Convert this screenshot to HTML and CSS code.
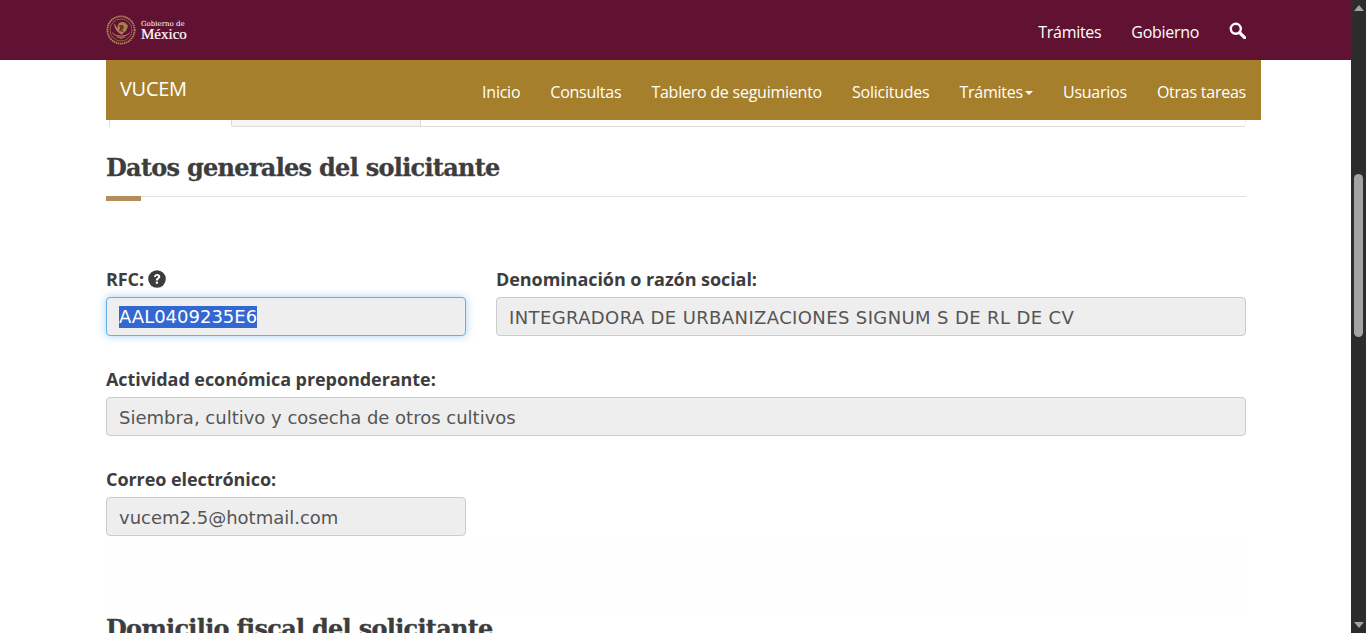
FILE: index.html
```html
<!DOCTYPE html>
<html lang="es">
<head>
    <meta charset="UTF-8">
    <meta name="viewport" content="width=device-width, initial-scale=1.0">
    <title>VUCEM</title>
    <link rel="stylesheet" href="styles.css">
</head>
<body>
    <div class="page">
        <header class="topbar">
            <a class="logo" href="#">
                <svg class="logo-seal" width="30" height="30" viewBox="0 0 30 30">
                    <circle cx="15" cy="15" r="13.6" fill="none" stroke="#b8925c" stroke-width="1.8" stroke-dasharray="1.4 .7"/>
                    <circle cx="15" cy="15" r="11" fill="none" stroke="#8f5f45" stroke-width="1"/>
                    <path d="M6 17c1 6 17 6 18 0-1 1-2 2-3 2.500-3 1.500-9 1.500-12 0-1-.5-2-1.500-3-2.500z" fill="#b8925c"/>
                    <path d="M8 8c2 3 3 5 4 5-1-3 1-6 4-6 3 0 5 2 6 4-1 3-2 6-5 7l-1 2-3-2c-3-2-5-6-5-10z" fill="#a97f52"/>
                    <path d="M13 10l4 0 1 3-2 2 2 2-5-1 1-3z" fill="#6f3336"/>
                    <path d="M10 22l2-1 3 1 3-1 2 1-5 2z" fill="#96694a"/>
                </svg>
                <span class="logo-text">
                    <span class="logo-small">Gobierno de</span>
                    <span class="logo-big">México</span>
                </span>
            </a>
            <nav class="topnav">
                <a href="#">Trámites</a>
                <a href="#">Gobierno</a>
                <svg class="search-icon" width="17" height="17" viewBox="0 0 17 17">
                    <circle cx="6.800" cy="6.800" r="5" fill="none" stroke="#fff" stroke-width="2.400"/>
                    <path d="M10.600 10.600l5 5" stroke="#fff" stroke-width="3.200" stroke-linecap="round"/>
                </svg>
            </nav>
        </header>
        <div class="subnav">
            <span class="brand">VUCEM</span>
            <nav class="subnav-links">
                <a href="#">Inicio</a>
                <a href="#">Consultas</a>
                <a href="#">Tablero de seguimiento</a>
                <a href="#">Solicitudes</a>
                <a href="#">Trámites<span class="caret"></span></a>
                <a href="#">Usuarios</a>
                <a href="#">Otras tareas</a>
            </nav>
        </div>
        <main class="content">
            <div class="tabs">
                <div class="tab tab-active"></div>
                <div class="tab tab-other"></div>
                <div class="tab-rest"></div>
            </div>
            <h2 class="section-title section-first">Datos generales del solicitante</h2>
            <div class="title-rule"></div>
            <form class="fields">
                <div class="row">
                    <div class="field field-small">
                        <label>RFC:
                            <svg class="help" width="18" height="18" viewBox="0 0 17 17">
                                <circle cx="8.500" cy="8.500" r="8.300" fill="#3d3d3d"/>
                                <path d="M5.600 6.600c.2-1.800 1.500-2.800 3-2.800 1.700 0 3 1.100 3 2.500 0 2-2.200 2-2.200 3.700H7.400c0-2.600 2.100-2.500 2.100-3.600 0-.6-.4-1-1-1-.7 0-1 .4-1.200 1.100z" fill="#fff"/>
                                <rect x="7.400" y="11" width="2" height="2" fill="#fff"/>
                            </svg>
                        </label>
                        <div class="input input-focus"><span class="selected">AAL0409235E6</span></div>
                    </div>
                    <div class="field field-grow">
                        <label>Denominación o razón social:</label>
                        <div class="input input-caps">INTEGRADORA DE URBANIZACIONES SIGNUM S DE RL DE CV</div>
                    </div>
                </div>
                <div class="row">
                    <div class="field field-grow">
                        <label>Actividad económica preponderante:</label>
                        <div class="input">Siembra, cultivo y cosecha de otros cultivos</div>
                    </div>
                </div>
                <div class="row row-last">
                    <div class="field field-small">
                        <label>Correo electrónico:</label>
                        <div class="input">vucem2.5@hotmail.com</div>
                    </div>
                </div>
            </form>
            <div class="faint-band"></div>
            <h2 class="section-title section-next">Domicilio fiscal del solicitante</h2>
        </main>
    </div>
    <div class="scrollbar">
        <span class="arrow-up"></span>
        <div class="thumb"></div>
        <span class="arrow-down"></span>
    </div>
</body>
</html>
```

FILE: styles.css
```css
html, body { margin: 0; padding: 0; height: 100%; overflow: hidden; }
body { display: flex; background: #fff; color: #3d3d3d; font-family: 'Open Sans', Arial, sans-serif; font-size: 16px; }
a { text-decoration: none; color: inherit; }

.page { flex: 1; height: 633px; overflow: hidden; }
.scrollbar { width: 15px; background: #2c2c2c; height: 633px; display: flex; flex-direction: column; align-items: center; }
.arrow-up { margin-top: 5px; border-left: 5px solid transparent; border-right: 5px solid transparent; border-bottom: 6px solid #a3a3a3; }
.thumb { width: 9px; height: 163px; margin-top: 163px; background: #a3a3a3; border-radius: 5px; }
.arrow-down { margin-top: auto; margin-bottom: 5px; border-left: 5px solid transparent; border-right: 5px solid transparent; border-top: 6px solid #a3a3a3; }

.topbar { height: 60px; background: #611232; display: flex; align-items: center; justify-content: space-between; padding: 0 105px 0 106px; color: #fff; }
.logo { display: flex; align-items: center; gap: 5px; }
.logo-seal { margin-top: -1px; }
.logo-text { display: flex; flex-direction: column; padding-top: 1px; }
.logo-small { font-family: 'DejaVu Serif', serif; font-size: 7px; line-height: 8px; }
.logo-big { font-family: 'Liberation Serif', serif; font-size: 15px; line-height: 13px; -webkit-text-stroke: 0.2px #fff; }
.topnav { display: flex; align-items: center; gap: 30px; font-size: 16px; letter-spacing: -0.3px; padding-top: 4px; }
.search-icon { margin-bottom: 4px; }

.subnav { height: 60px; margin-left: 106px; width: 1155px; background: #a57f2c; color: #fff; display: flex; align-items: center; justify-content: space-between; padding: 0 15px 0 14px; box-sizing: border-box; }
.brand { font-size: 20px; letter-spacing: -0.3px; margin-bottom: 3px; }
.subnav-links { display: flex; gap: 30px; font-size: 16px; letter-spacing: -0.24px; padding-top: 3px; }
.caret { display: inline-block; margin-left: 2px; vertical-align: middle; border-left: 4px solid transparent; border-right: 4px solid transparent; border-top: 4px solid #fff; }

.content { margin: 0 105px 0 106px; }
.tabs { display: flex; height: 7px; }
.tab { box-sizing: border-box; border: 1px solid #ddd; border-top: 0; }
.tab-active { margin-left: 3px; width: 122px; border-bottom: 0; border-right: 0; }
.tab-other { width: 190px; background: #f5f5f5; border-radius: 0 0 0 2px; }
.tab-rest { flex: 1; border-bottom: 1px solid #ddd; border-right: 1px solid #eee; border-radius: 0 0 3px 0; }

.section-title { margin: 0; font-family: 'DejaVu Serif', serif; font-weight: bold; font-size: 24px; line-height: 32px; color: #3d3d3d; letter-spacing: -0.72px; -webkit-text-stroke: 0.3px #3d3d3d; }
.section-first { padding-top: 25px; }
.section-next { margin-top: 3px; }
.title-rule { height: 1px; margin-top: 12px; background: #e0e0e0; position: relative; }
.title-rule::after { content: ""; position: absolute; left: 0; top: 0; width: 35px; height: 5px; background: #b38e5d; }

.fields { padding-top: 71px; }
.row { display: flex; gap: 30px; margin-bottom: 32px; }
.row-last { margin-bottom: 1px; }
.field { display: flex; flex-direction: column; }
.field-small { width: 360px; }
.field-grow { flex: 1; }
label { font-weight: 700; font-size: 18px; line-height: 22px; height: 22px; margin-bottom: 7px; letter-spacing: -0.07px; display: flex; align-items: center; gap: 4px; }
.input { box-sizing: border-box; height: 39px; border: 1px solid #ccc; border-radius: 4px; background: #eee; padding: 1px 12px 0; display: flex; align-items: center; font-family: 'DejaVu Sans', Verdana, sans-serif; font-size: 18px; color: #555; }
.input-caps { letter-spacing: 0.38px; }
.input-focus { border-color: #66afe9; box-shadow: 0 0 8px rgba(102, 175, 233, 0.6); }
.selected { background: #3367d1; color: #fff; line-height: 22px; }

.faint-band { height: 73px; background: #fefefe; }
```
